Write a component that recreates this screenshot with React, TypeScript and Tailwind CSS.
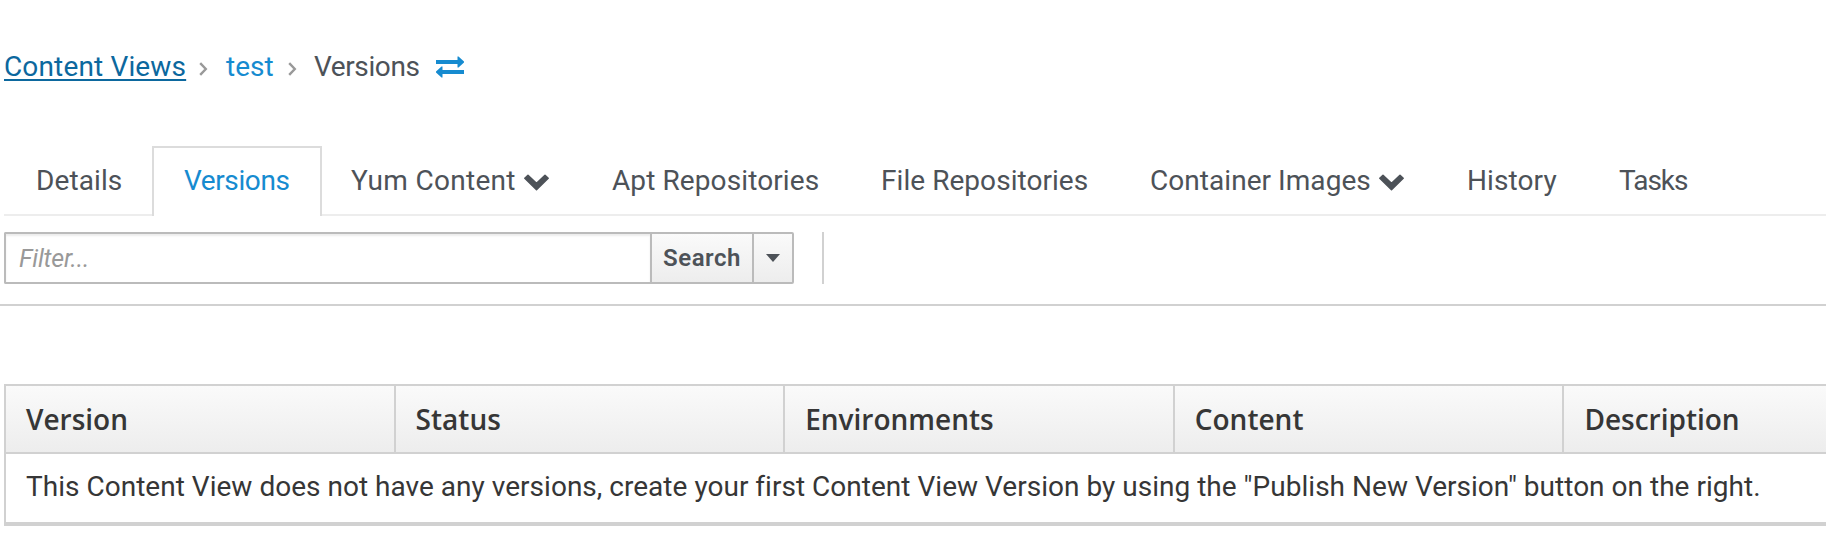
import React from 'react';

interface Tab {
    label: string;
    className: string;
    active?: boolean;
    dropdown?: boolean;
}

const TABS: Tab[] = [
    { label: 'Details', className: 'w-[148px] pl-8 tracking-[0.1px]' },
    { label: 'Versions', className: 'w-[170px] pl-[30px] tracking-[-0.4px]', active: true },
    { label: 'Yum Content', className: 'w-[261px] pl-[29px] tracking-[0.3px]', dropdown: true },
    { label: 'Apt Repositories', className: 'w-[268px] pl-[29px] tracking-[0.1px]' },
    { label: 'File Repositories', className: 'w-[269px] pl-[30px] tracking-[0.05px]' },
    { label: 'Container Images', className: 'w-[316px] pl-[30px] tracking-[0.05px]', dropdown: true },
    { label: 'History', className: 'w-[153px] pl-[31px] tracking-[0.1px]' },
    { label: 'Tasks', className: 'pl-[30px] tracking-[-1px]' },
];

const COLUMNS = ['Version', 'Status', 'Environments', 'Content', 'Description'];

const Separator = () => (
    <svg className="h-[14px] w-[9px]" viewBox="0 0 9 14" fill="none" stroke="#999" strokeWidth="2.4">
        <path d="M1.2 1.200L6.800 7l-5.600 5.800" />
    </svg>
);

const SwitcherIcon = () => (
    <svg className="h-[22px] w-[28px]" viewBox="0 0 28 22" fill="#168bd0">
        <path d="M0 4h21.500V.5h1L28 5.500v1L22.500 11.500h-1V8H0z" />
        <path d="M28 14H6.500v-3.500h-1L0 15.500v1l5.500 5h1V18H28z" />
    </svg>
);

const ChevronDown = () => (
    <svg className="mt-[3px] h-[17px] w-[25px]" viewBox="0 0 25 17" fill="#4d5258" stroke="#4d5258" strokeWidth="1.5" strokeLinejoin="round">
        <path d="M4 1.200L12.500 9.200 21 1.200 24.200 4.300 12.500 15.800.8 4.300z" />
    </svg>
);

const Breadcrumb = () => (
    <nav className="flex h-10 items-center whitespace-nowrap pl-1 text-[28px] leading-10">
        <a href="#" className="w-[182px] tracking-[0.15px] text-[#0c689e] underline decoration-2 underline-offset-[3px]">Content Views</a>
        <span className="ml-[13px] mt-[3px]"><Separator /></span>
        <a href="#" className="ml-[18px] w-[48px] text-[#168bd0]">test</a>
        <span className="ml-[14px] mt-[3px]"><Separator /></span>
        <span className="ml-[17px] w-[105px] tracking-[-0.4px]">Versions</span>
        <button className="ml-[17px]"><SwitcherIcon /></button>
    </nav>
);

const TabBar = () => (
    <ul className="ml-1 mt-[59px] flex h-[70px] border-b-2 border-[#ededed] text-[28px]">
        {TABS.map(({ label, className, active, dropdown }) => (
            <li
                key={label}
                className={`flex h-[70px] shrink-0 items-center whitespace-nowrap ${className} ${active ? 'border-x-2 border-t-2 border-[#dcdcdc] bg-white pb-[2px] text-[#168bd0]' : ''}`}
            >
                {label}
                {dropdown && <span className="ml-2"><ChevronDown /></span>}
            </li>
        ))}
    </ul>
);

const SearchBar = () => (
    <div className="flex h-[90px] border-b-2 border-[#d1d1d1] pl-1 pt-4">
        <input
            type="text"
            placeholder="Filter..."
            className="h-[52px] w-[646px] rounded-l-[2px] border-2 border-r-0 border-[#bbb] pl-[13px] text-[25px] tracking-[-0.2px] shadow-[inset_0_2px_2px_rgba(3,3,3,0.075)] outline-none placeholder:italic placeholder:text-[#999]"
        />
        <button className="h-[52px] w-[102px] border-2 border-r-0 border-[#bbb] bg-linear-to-b from-[#fafafa] to-[#ededed] text-[24px] font-semibold tracking-[0.5px]">
            Search
        </button>
        <button className="flex h-[52px] w-[42px] items-center justify-center rounded-r-[2px] border-2 border-[#bbb] bg-linear-to-b from-[#fafafa] to-[#ededed]">
            <svg className="mr-px h-2 w-[14px]" viewBox="0 0 14 8" fill="#4d5258"><path d="M0 0h14L7 8z" /></svg>
        </button>
        <div className="ml-7 h-[52px] w-[2px] bg-[#d1d1d1]" />
    </div>
);

const VersionsTable = () => (
    <div className="ml-1 mt-[78px] border-b-4 border-l-2 border-t-2 border-[#d1d1d1] text-[28px] text-[#363636]">
        <div className="flex h-[68px] border-b-2 border-[#d1d1d1] bg-linear-to-b from-[#fafafa] to-[#ededed] font-['Open_Sans'] font-semibold">
            {COLUMNS.map((column) => (
                <div key={column} className="flex w-[389.6px] shrink-0 items-center border-r-2 border-[#d1d1d1] pl-5">
                    {column}
                </div>
            ))}
        </div>
        <p className="h-[68px] whitespace-nowrap pl-5 leading-[66px] tracking-[0.02px]">
            This Content View does not have any versions, create your first Content View Version by using the "Publish New Version" button on the right.
        </p>
    </div>
);

export default function App() {
    return (
        <div className="h-[552px] w-full overflow-hidden bg-white pt-[47px] font-['Roboto',sans-serif] text-[#4d5258]">
            <Breadcrumb />
            <TabBar />
            <SearchBar />
            <VersionsTable />
        </div>
    );
}
